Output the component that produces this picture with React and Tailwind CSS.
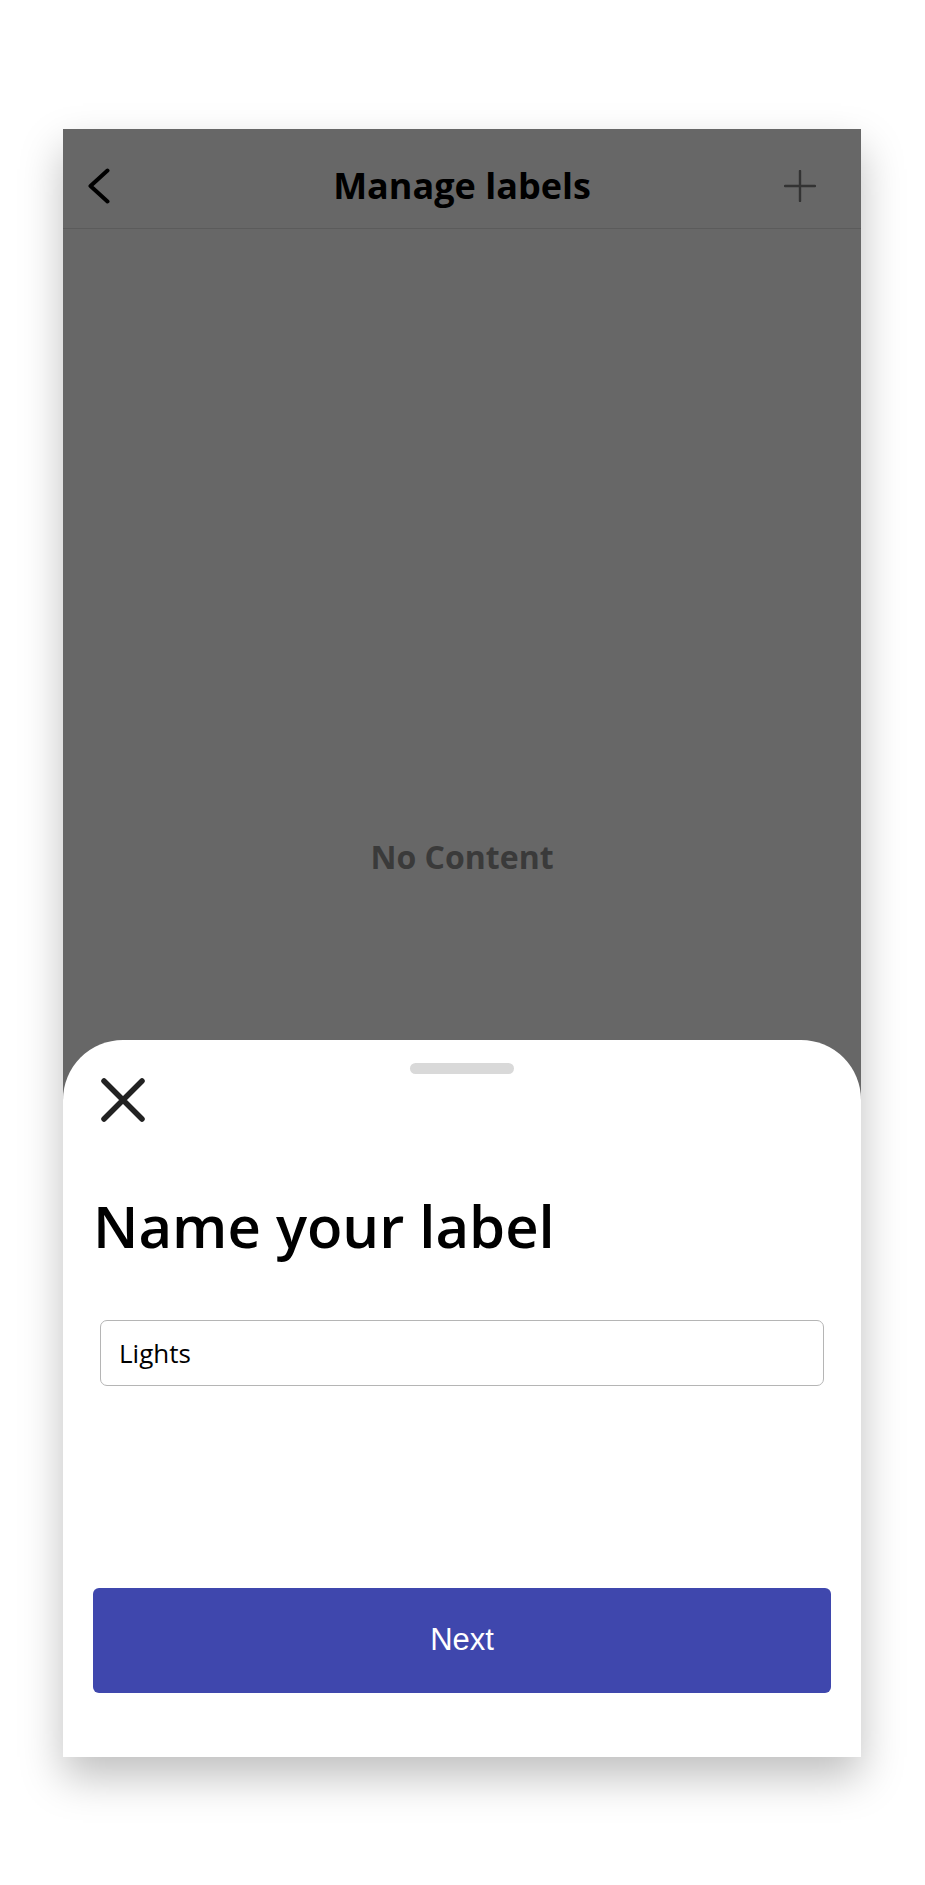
export default function App() {
  return (
    <div className="w-[925px] h-[1885px] bg-white pt-[129px] pl-[63px]">
      <div className="relative w-[798px] h-[1628px] overflow-hidden bg-[#676767] shadow-[0_20px_40px_rgba(0,0,0,0.25)] flex flex-col">
        {/* header */}
        <header className="h-[100px] shrink-0 grid grid-cols-[1fr_auto_1fr] items-center pt-[15px] px-[25px] border-b border-[#5b5b5b]">
          <svg width="22" height="36" viewBox="0 0 22 36" fill="none" className="justify-self-start">
            <polyline points="19.5,2.5 2.5,18 19.5,33.5" stroke="#000" strokeWidth="4" strokeLinecap="round" strokeLinejoin="round" />
          </svg>
          <h1 className="font-['Open_Sans',sans-serif] font-bold text-[36px] leading-none text-black">
            Manage labels
          </h1>
          <svg width="32" height="32" viewBox="0 0 32 32" fill="none" className="justify-self-end mr-[20px]">
            <path d="M16 1v30M1 16h30" stroke="#333" strokeWidth="2.4" strokeLinecap="round" />
          </svg>
        </header>

        <main className="flex-1 flex justify-center pt-[612px]">
          <p className="font-['Open_Sans',sans-serif] font-bold text-[32px] leading-none text-[#3a3a3a]">No Content</p>
        </main>

        {/* bottom sheet */}
        <div className="absolute left-0 right-0 bottom-0 h-[717px] bg-white rounded-t-[60px] flex flex-col px-[30px]">
          <div className="flex justify-center pt-[23px]">
            <div className="w-[104px] h-[11px] rounded-full bg-[#d9d9d9]" />
          </div>
          <button className="mt-[2px] ml-[6px] w-[48px] h-[48px] flex items-center justify-center">
            <svg width="46" height="44" viewBox="0 0 46 44" fill="none">
              <path d="M4 3l38 38M42 3L4 41" stroke="#222" strokeWidth="5.5" strokeLinecap="round" />
            </svg>
          </button>
          <h2 className="mt-[73px] font-['Open_Sans',sans-serif] font-semibold text-[58px] leading-none text-black">
            Name your label
          </h2>
          <div className="mt-[65px] mx-[7px] h-[66px] rounded-[7px] border border-[#b5b5b5] flex items-center px-[18px]">
            <span className="font-['Open_Sans',sans-serif] text-[26px] text-black">Lights</span>
          </div>
          <button className="mt-[202px] h-[105px] rounded-[6px] bg-[#3f47ad] text-white font-['Liberation_Sans',sans-serif] text-[31px]">
            Next
          </button>
        </div>
      </div>
    </div>
  )
}
